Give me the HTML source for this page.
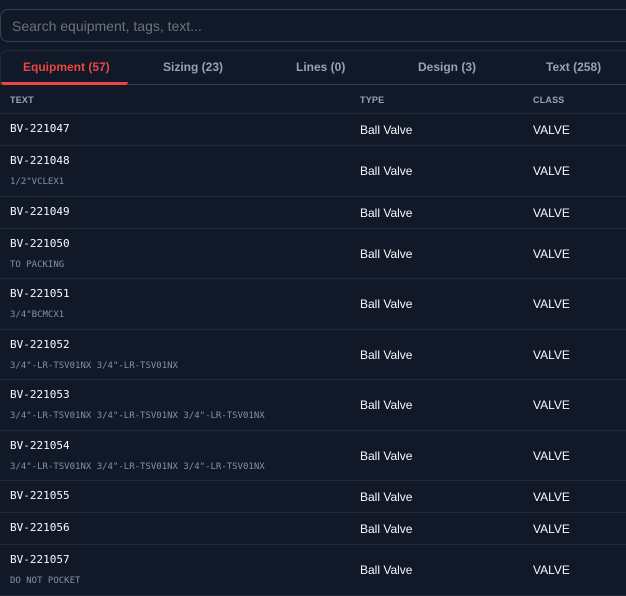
<!DOCTYPE html>
<html><head><style>
*{box-sizing:border-box;margin:0;padding:0}
body{width:626px;height:596px;background:#111827;font-family:"Liberation Sans",sans-serif;overflow:hidden;position:relative}
.search{position:absolute;left:0;top:9px;width:640px;height:33px;border:1px solid #374151;border-radius:8px;color:#6b7280;font-size:14px;padding:8px 11px;background:#111827}
.tabs{position:absolute;left:0;top:50px;width:640px;height:35px;border-top:1px solid #1f2937;border-left:1px solid #1f2937;border-radius:8px 0 0 0;border-bottom:1px solid #374151}
.tab{position:absolute;top:9px;font-size:12px;font-weight:bold;color:#94a3b8}
.act{color:#ef4444}
.ul{position:absolute;left:0;top:31px;width:127px;height:3px;background:#ef4444;border-radius:0 0 6px 6px}
.th{position:absolute;top:95px;font-size:9px;font-weight:bold;color:#94a3b8;letter-spacing:.2px}
.row{position:absolute;left:0;width:626px;border-bottom:1px solid #1f2937}
.tag{position:absolute;left:10px;font-family:"DejaVu Sans Mono",monospace;font-size:11px;color:#f8fafc}
.sub{position:absolute;left:10px;font-family:"DejaVu Sans Mono",monospace;font-size:9px;color:#8193a8}
.c{position:absolute;font-size:12px;color:#f8fafc}
</style></head><body>
<div class="search">Search equipment, tags, text...</div>
<div class="tabs">
<span class="tab act" style="left:22px">Equipment (57)</span>
<span class="tab" style="left:162px">Sizing (23)</span>
<span class="tab" style="left:295px">Lines (0)</span>
<span class="tab" style="left:417px">Design (3)</span>
<span class="tab" style="left:545px">Text (258)</span>
<div class="ul"></div>
</div>
<span class="th" style="left:10px">TEXT</span>
<span class="th" style="left:360px">TYPE</span>
<span class="th" style="left:533px">CLASS</span>
<div class="row" style="top:85px;height:29px"></div>
<div id="rows"></div>
<script>
var d=[["BV-221047",""],["BV-221048","1/2\"VCLEX1"],["BV-221049",""],["BV-221050","TO PACKING"],["BV-221051","3/4\"BCMCX1"],["BV-221052","3/4\"-LR-TSV01NX 3/4\"-LR-TSV01NX"],["BV-221053","3/4\"-LR-TSV01NX 3/4\"-LR-TSV01NX 3/4\"-LR-TSV01NX"],["BV-221054","3/4\"-LR-TSV01NX 3/4\"-LR-TSV01NX 3/4\"-LR-TSV01NX"],["BV-221055",""],["BV-221056",""],["BV-221057","DO NOT POCKET"]];
var y=114,h="";
d.forEach(function(r){var H=r[1]?50.5:32;var yy=Math.round(y);var m=yy+H/2;
h+='<div class="row" style="top:'+yy+'px;height:'+Math.round(y+H-yy)+'px"></div>';
if(r[1]){h+='<span class="tag" style="top:'+(yy+8)+'px">'+r[0]+'</span><span class="sub" style="top:'+(yy+31)+'px">'+r[1].replace(/"/g,'&quot;')+'</span>';}
else h+='<span class="tag" style="top:'+(yy+8)+'px">'+r[0]+'</span>';
h+='<span class="c" style="left:360px;top:'+Math.round(m-7)+'px">Ball Valve</span><span class="c" style="left:533px;top:'+Math.round(m-7)+'px">VALVE</span>';
y+=H;});
document.getElementById('rows').innerHTML=h;
</script>
</body></html>
